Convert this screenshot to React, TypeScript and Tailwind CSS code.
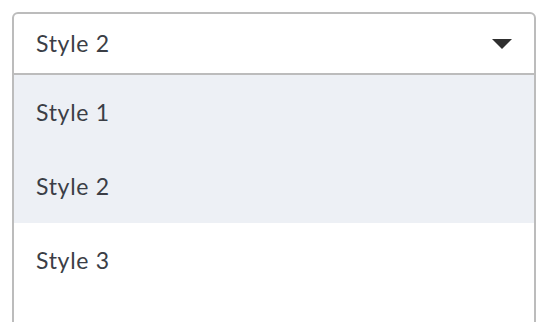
import React from "react";

export default function App() {
  const items = ["Style 1", "Style 2", "Style 3"];
  return (
    <div className="w-[552px] h-[322px] overflow-hidden bg-white pt-3 px-3" style={{ fontFamily: "Lato, 'Noto Sans', sans-serif" }}>
      <div className="w-[524px] h-[340px] border-2 border-[#bcbcbc] rounded-t-md">
        <div className="h-[61px] flex items-center justify-between pl-[22px] pr-[22px] border-b-2 border-[#bcbcbc] text-[23px] tracking-[0.7px] text-[#3b3e46]">
          <span>Style 2</span>
          <svg width="20" height="10" viewBox="0 0 20 10"><path d="M0 0H20L10 10Z" fill="#2f2f2f" /></svg>
        </div>
        {items.map((it, i) => (
          <div key={it} className={`h-[74px] flex items-center pl-[22px] text-[23px] tracking-[0.7px] text-[#3b3e46] ${i < 2 ? "bg-[#edf0f5]" : "bg-white"}`}>
            {it}
          </div>
        ))}
      </div>
    </div>
  );
}
